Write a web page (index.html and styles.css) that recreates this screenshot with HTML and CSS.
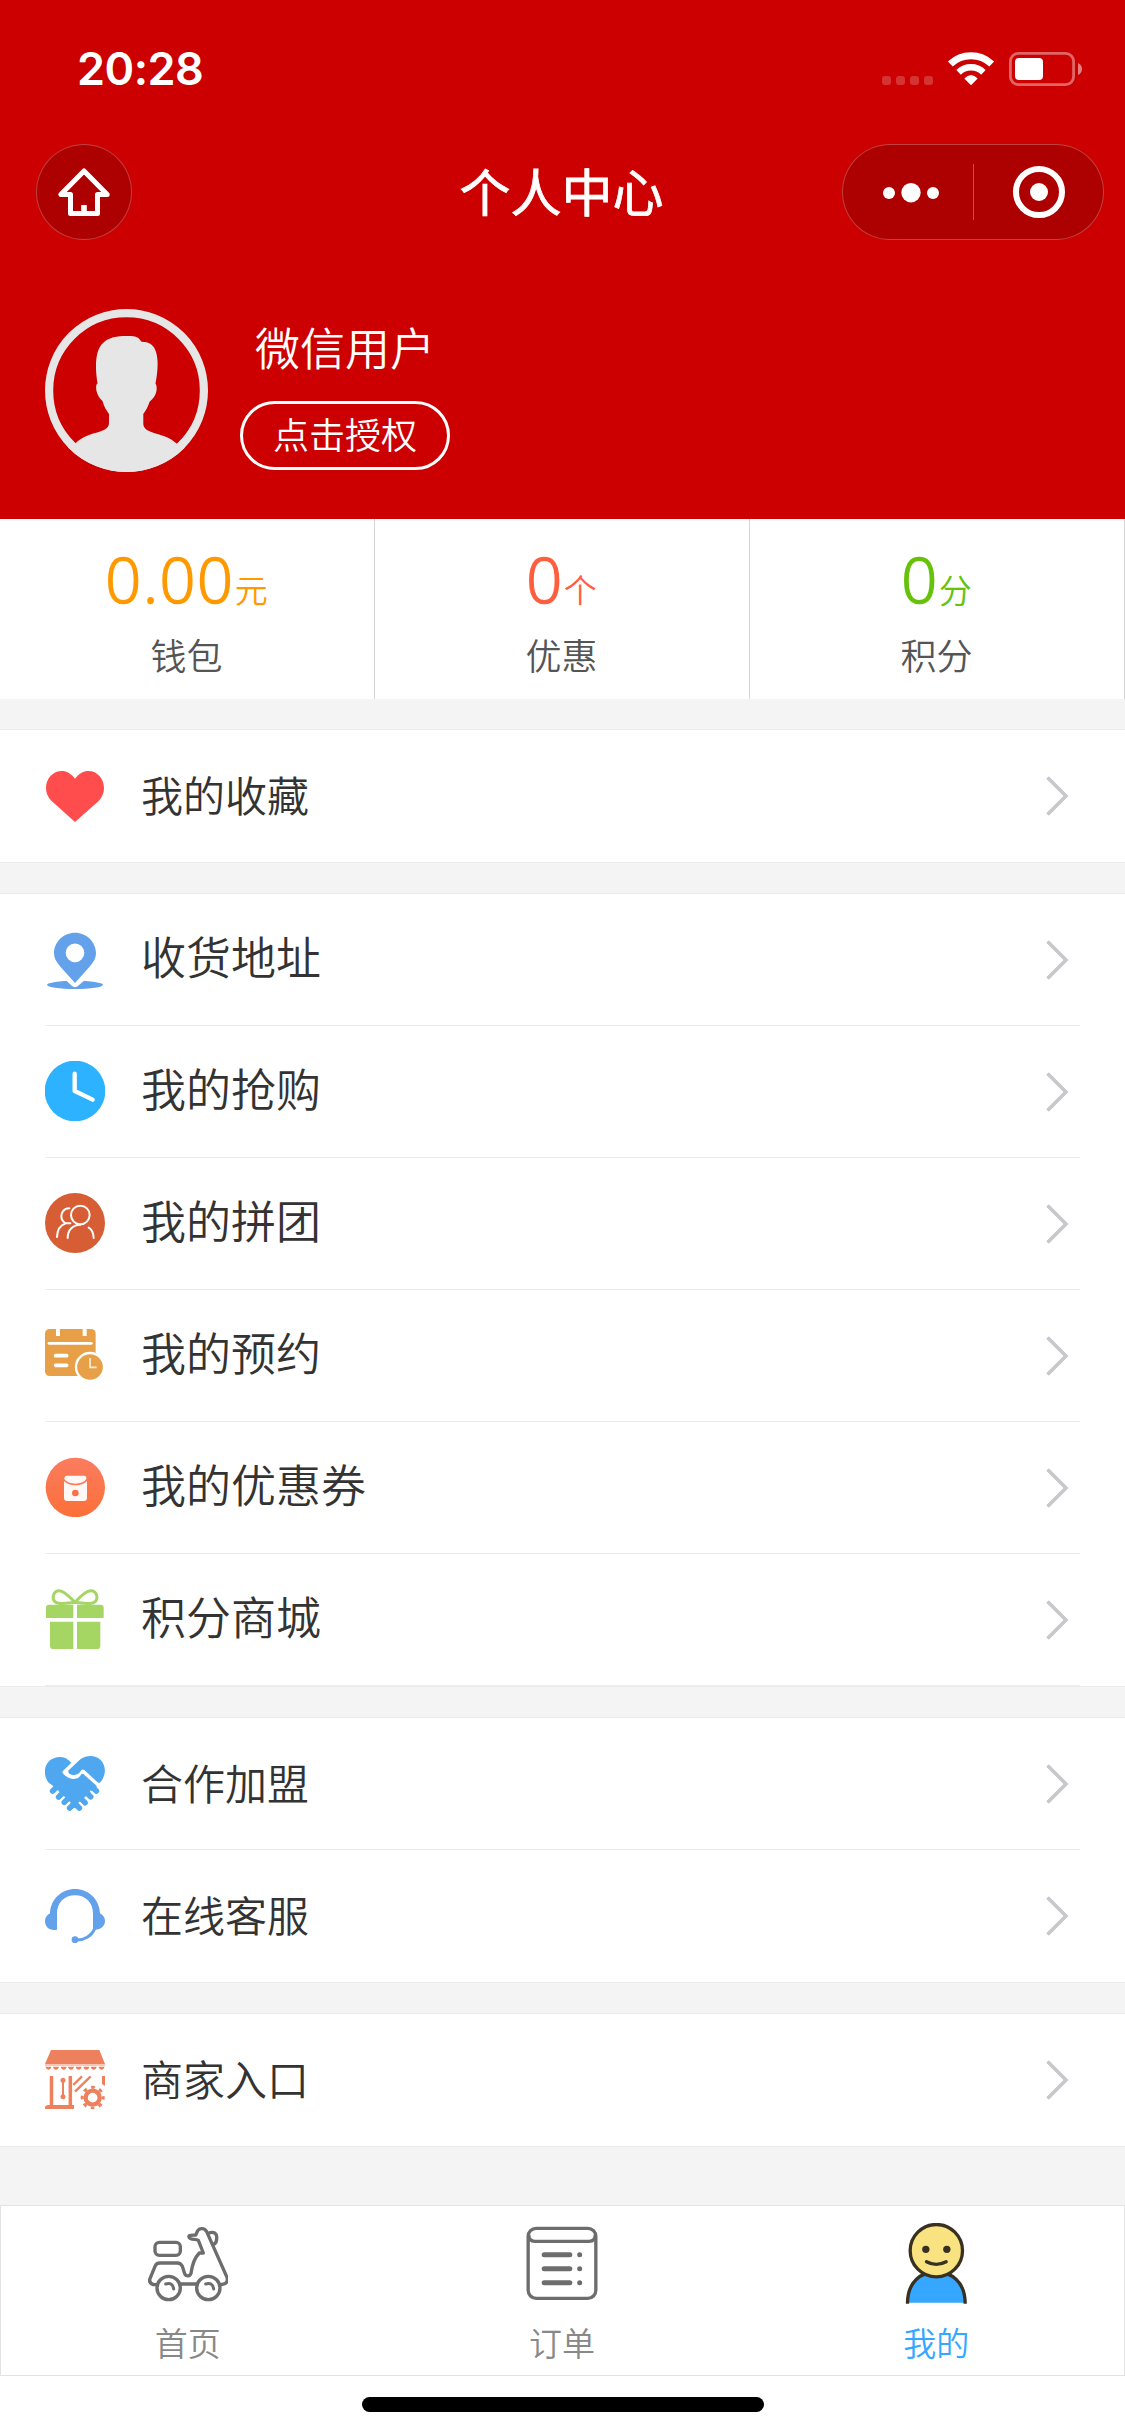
FILE: index.html
```html
<!DOCTYPE html>
<html lang="zh-CN">
<head>
<meta charset="utf-8">
<title>个人中心</title>
<link rel="stylesheet" href="styles.css">
</head>
<body>
<div class="page">
  <header class="header">
    <div class="status">
      <span class="time">20:28</span>
      <svg class="status-icons" viewBox="880 50 204 38">
        <g fill="#fff" fill-opacity=".2"><rect x="882" y="76" width="9" height="9" rx="3"/><rect x="896" y="76" width="9" height="9" rx="3"/><rect x="910" y="76" width="9" height="9" rx="3"/><rect x="924" y="76" width="9" height="9" rx="3"/></g>
        <g fill="none" stroke="#fff"><path d="M950.3 64 A30 30 0 0 1 991.700 64" stroke-width="7"/><path d="M958.600 72.300 A18 18 0 0 1 983.400 72.300" stroke-width="6.500"/></g>
        <path d="M964.300 78.600 Q971 71.500 977.700 78.600 L971 85.300Z" fill="#fff"/>
        <rect x="1010.400" y="53.400" width="63.200" height="31.200" rx="8" fill="none" stroke="#fff" stroke-opacity=".4" stroke-width="2.800"/>
        <rect x="1015" y="58" width="28" height="22" rx="4" fill="#fff"/>
        <path d="M1078 63 Q1082 65 1082 69 Q1082 73 1078 75Z" fill="#fff" fill-opacity=".5"/>
      </svg>
    </div>
    <div class="nav">
      <div class="home">
        <svg viewBox="36 144 96 96"><path d="M84 171 L60.800 194.500 H70.500 V213.500 H97.500 V194.500 H107.200Z" fill="none" stroke="#fff" stroke-width="5" stroke-linejoin="round"/><path d="M81.200 205H86.800V213H81.200Z" fill="#fff"/></svg>
      </div>
      <h1 class="title">个人中心</h1>
      <div class="capsule">
        <svg viewBox="842 144 262 96"><g fill="#fff"><circle cx="889" cy="193" r="6"/><circle cx="911" cy="192.700" r="9.700"/><circle cx="933" cy="193" r="6"/><circle cx="1039" cy="192" r="9"/></g><path d="M973.500 164V220" stroke="#fff" stroke-opacity=".3"/><circle cx="1039" cy="192" r="23" fill="none" stroke="#fff" stroke-width="6"/></svg>
      </div>
    </div>
    <div class="profile">
      <svg class="avatar" viewBox="45 309 163 163">
        <defs><clipPath id="disc"><circle cx="126.500" cy="390.500" r="81.500"/></clipPath></defs>
        <circle cx="126.500" cy="390.500" r="77.400" fill="none" stroke="#e6e6e6" stroke-width="8.200"/>
        <path clip-path="url(#disc)" fill="#e6e6e6" d="M109 414 C107 411 104 407 102.500 401 C99 398 95.500 392 96.200 386 C96.500 384 97 384 97.500 383.500 C95 368 95 352 102 344 C109 335.500 122 335.800 131 336 C137 336.200 139 338 141.500 341.800 C151 342 154 346 156 352 C158.800 361 157.500 373 155.500 383.500 C157.500 386 157 393 154 397 C152 400 150.500 400.500 149.500 402 C148 407 145.500 411 143.300 414 V424 C144 432 155 432.500 165 436.500 C170 438.500 174 441 176.500 443.500 L190 450 V480 H60 V450 L75.500 443.500 C79 439 88 435 94 433.300 C103 431 109 429 109 423Z"/>
      </svg>
      <div class="who">
        <div class="name">微信用户</div>
        <div class="auth">点击授权</div>
      </div>
    </div>
  </header>

  <section class="stats">
    <div class="stat"><div class="value orange">0.00<span class="unit">元</span></div><div class="label">钱包</div></div>
    <div class="stat"><div class="value coral">0<span class="unit">个</span></div><div class="label">优惠</div></div>
    <div class="stat"><div class="value green">0<span class="unit">分</span></div><div class="label">积分</div></div>
  </section>

  <section class="group small">
    <div class="row">
      <svg class="icon" viewBox="135 765 180 180"><path fill="#ff4d4d" d="M225 806 C212 790 200 783 186 783 C158 783 138 806 138 834 C138 850 144 862 155 873 L225 936 L296 873 C306 862 312 850 312 834 C312 806 292 783 265 783 C250 783 237 791 225 806Z"/></svg>
      <span class="text">我的收藏</span><svg class="arrow" viewBox="0 0 24 42"><path d="M2.500 2.500 L21 21 L2.500 39.500"/></svg>
    </div>
  </section>

  <section class="group large">
    <div class="row">
      <svg class="icon" viewBox="135 87 180 180"><ellipse cx="225" cy="254.500" rx="84" ry="12.500" fill="#63a1ea"/><path d="M200 238 L217 254 Q225 262 233 254 L252 238" fill="#fff" stroke="#fff" stroke-width="7"/><path fill="#63a1ea" fill-rule="evenodd" d="M225 249 L180 199 C168 184 162 174 162 160 C162 126 190 98 225 98 C260 98 288 126 288 160 C288 174 282 184 270 199Z M225 130.500A28 28 0 1 0 225 186.500A28 28 0 1 0 225 130.500Z"/></svg>
      <span class="text">收货地址</span><svg class="arrow" viewBox="0 0 24 42"><path d="M2.500 2.500 L21 21 L2.500 39.500"/></svg>
    </div>
    <div class="row">
      <svg class="icon" viewBox="135 483 180 180"><circle cx="225" cy="573" r="91" fill="#2db2ff"/><path d="M224 521V573L278 599" fill="none" stroke="#fff" stroke-width="13" stroke-linecap="round" stroke-linejoin="round"/></svg>
      <span class="text">我的抢购</span><svg class="arrow" viewBox="0 0 24 42"><path d="M2.500 2.500 L21 21 L2.500 39.500"/></svg>
    </div>
    <div class="row">
      <svg class="icon" viewBox="135 879 180 180"><circle cx="225" cy="969" r="90" fill="#d75e34"/><g fill="none" stroke="#fff" stroke-width="6" stroke-linecap="round"><circle cx="241" cy="945" r="28"/><path d="M208 925 C190 925 184 939 184 949 C184 959 190 966 197 970 C181 975 172 986 171 1011 M197 970H211 M203 1014 C203 989 220 974 241 974 M266 983 C276 988 280 999 281 1014"/></g></svg>
      <span class="text">我的拼团</span><svg class="arrow" viewBox="0 0 24 42"><path d="M2.500 2.500 L21 21 L2.500 39.500"/></svg>
    </div>
    <div class="row">
      <svg class="icon" viewBox="135 105 180 180"><rect x="135" y="117" width="152" height="141" rx="14" fill="#e8a048"/><g stroke="#fff" fill="none"><path d="M174 114V138M254 114V138" stroke-width="12"/><path d="M147 160H274" stroke-width="8" stroke-linecap="round"/><path d="M167 197H200M167 226H200" stroke-width="11" stroke-linecap="round"/></g><circle cx="270" cy="231" r="42" fill="#e8a048" stroke="#fff" stroke-width="7"/><path d="M270 204V232H290" fill="none" stroke="#fff" stroke-opacity=".8" stroke-width="5"/></svg>
      <span class="text">我的预约</span><svg class="arrow" viewBox="0 0 24 42"><path d="M2.500 2.500 L21 21 L2.500 39.500"/></svg>
    </div>
    <div class="row">
      <svg class="icon" viewBox="135 501 180 180"><defs><linearGradient id="coupon" x2="0" y2="1"><stop stop-color="#fb7c5f"/><stop offset="1" stop-color="#fc6f38"/></linearGradient></defs><circle cx="226" cy="592.500" r="89" fill="url(#coupon)"/><path fill="#fff" fill-opacity=".95" d="M192 573 C207 590 246 590 261 573 V624 Q261 633 251 633 H202 Q192 633 192 624Z"/><path fill="#fff" fill-opacity=".95" d="M193 567 Q193 557 201 557 H252 Q260 557 259 567 Q250 581 226 581 Q202 581 193 567Z"/><circle cx="226" cy="609" r="10" fill="#fb7048"/></svg>
      <span class="text">我的优惠券</span><svg class="arrow" viewBox="0 0 24 42"><path d="M2.500 2.500 L21 21 L2.500 39.500"/></svg>
    </div>
    <div class="row">
      <svg class="icon" viewBox="135 897 180 180"><g fill="#a5d663"><path d="M138 984V953Q138 944 147 944H220V984Z M231 984V944H302Q311 944 311 953V984Z M150 995H220V1077H160Q150 1077 150 1067Z M231 995H301V1067Q301 1077 291 1077H231Z"/></g><path d="M225 937 C211 922 192 902 178 902 C160 902 153 926 167 937 C178 945 205 939 225 937 C239 921 258 902 272 902 C291 902 297 926 283 937 C272 945 245 939 225 937Z" fill="none" stroke="#a5d663" stroke-width="9"/></svg>
      <span class="text">积分商城</span><svg class="arrow" viewBox="0 0 24 42"><path d="M2.500 2.500 L21 21 L2.500 39.500"/></svg>
    </div>
  </section>

  <section class="group small">
    <div class="row">
      <svg class="icon" viewBox="135 189 180 180"><g fill="#4fa7f0"><path d="M214 218 C196 196 168 197 150 211 C130 228 130 258 146 278 L160 288 L223 349 L288 294 Q292 290 288 286 L250 252 Q247 250 244 253 C238 262 234 267 220 267 C204 267 187 251 187 247 Q187 244 191 241Z"/><path d="M206 241 L242 207 C262 193 288 196 302 210 C319 228 319 256 301 277 Q297 280 293 277 L253 240 Q248 237 244 241 C238 248 236 254 223 255 C212 256 201 248 206 241Z"/></g><path d="M158 303L170 291M176 321L188 309M193 337L205 325M209 354L221 342M289 303L277 291M272 320L260 308M255 338L243 326M238 354L226 342" stroke="#4fa7f0" stroke-width="17" stroke-linecap="round"/><path d="M166 313L174 305M183 330L191 322M200 346L208 338M280 312L272 304M264 330L256 322M247 346L239 338" stroke="#fff" stroke-width="5" stroke-linecap="round"/></svg>
      <span class="text">合作加盟</span><svg class="arrow" viewBox="0 0 24 42"><path d="M2.500 2.500 L21 21 L2.500 39.500"/></svg>
    </div>
    <div class="row">
      <svg class="icon" viewBox="135 585 180 180"><g fill="#63a1ea"><path d="M171 719V671C171 638 193 616 225 616C257 616 279 638 279 671V719H285C302 719 315 709 315 693C315 683 309 675 300 670C298 626 264 597 225 597C186 597 152 626 150 670C141 675 135 683 135 693C135 709 146 721 164 720Z"/><circle cx="225" cy="749" r="10"/></g><path d="M284 716C275 738 252 751 228 750" fill="none" stroke="#63a1ea" stroke-width="9"/></svg>
      <span class="text">在线客服</span><svg class="arrow" viewBox="0 0 24 42"><path d="M2.500 2.500 L21 21 L2.500 39.500"/></svg>
    </div>
  </section>

  <section class="group small">
    <div class="row">
      <svg class="icon" viewBox="135 1077 180 180"><g fill="#ed815d"><path d="M153 1080H298L315 1122H135Z"/><path fill-opacity=".45" d="M135 1122H315V1128H135Z"/><path d="M136 1130h19q-3 9-9.500 9t-9.500-9z M159 1130h18q-2 9-9 9t-9-9z M182 1130h18q-2 9-9 9t-9-9z M204 1130h18q-2 9-9 9t-9-9z M227 1130h18q-2 9-9 9t-9-9z M250 1130h18q-2 9-9 9t-9-9z M272 1130h18q-2 9-9 9t-9-9z M295 1130h19q-3 9-9.500 9t-9.500-9z"/><path d="M306 1158H315V1188L306 1182Z M135 1253Q135 1245 146 1245H222V1260H142Q135 1260 135 1253Z"/><circle cx="189" cy="1171" r="7.500"/><circle cx="189" cy="1220" r="7.500"/></g><g fill="none" stroke="#ed815d"><path d="M154.500 1158V1248M211 1158V1248" stroke-width="10.500"/><path d="M189 1171V1220" stroke-width="6"/><path d="M220 1185L246 1159M225 1205L272 1159" stroke-width="7"/><circle cx="278" cy="1223" r="21" stroke-width="13"/><circle cx="278" cy="1223" r="31.500" stroke-width="9" stroke-dasharray="11 13.740" stroke-dashoffset="5.500"/></g></svg>
      <span class="text">商家入口</span><svg class="arrow" viewBox="0 0 24 42"><path d="M2.500 2.500 L21 21 L2.500 39.500"/></svg>
    </div>
  </section>

  <nav class="tabs">
    <div class="tab">
      <svg viewBox="51 69 243 243" fill="none" stroke="#6d6d6d" stroke-width="10" stroke-linejoin="round" stroke-linecap="round"><rect x="75" y="127" width="76" height="39" rx="13"/><circle cx="116" cy="264" r="35"/><circle cx="235" cy="264" r="35"/><path d="M78 254 H70 C60 250 57 244 60 236 L75 199 Q79 189 90 189 H142 Q152 189 157 199 L164 221 C168 230 180 230 183 220 C186 197 193 174 208 159 H220 L205 121 C197 116 183 121 178 113 C173 105 183 106 197 105 C202 97 201 87 213 86 Q224 84 230 95 L291 232 Q295 245 285 251 L274 254 M154 252H197 M236 99 C252 93 262 101 260 116 Q260 128 252 133"/><path stroke-width="9" d="M107 252Q127 245 131 267M227 252Q247 245 251 267"/></svg>
      <span>首页</span>
    </div>
    <div class="tab">
      <svg viewBox="64.500 69 243 243" fill="none" stroke="#6d6d6d" stroke-width="10" stroke-linecap="round"><rect x="86" y="85" width="203" height="210" rx="24"/><path d="M88 106Q88 124 106 124H269Q287 124 287 106"/><path stroke-width="15" d="M134 164H211M134 206H211M134 248H211"/><path stroke-width="15" d="M240.500 164h.1M240.500 206h.1M240.500 248h.1"/></svg>
      <span>订单</span>
    </div>
    <div class="tab active">
      <svg viewBox="1188.500 69 243 243"><path d="M1223 308C1223 244 1264 216 1309 216S1396 244 1396 308" fill="#36a7ff"/><path d="M1223 311C1223 244 1264 216 1309 216S1396 244 1396 311" fill="none" stroke="#383122" stroke-width="10"/><circle cx="1309.500" cy="152" r="78.500" fill="#f9e380" stroke="#383122" stroke-width="10"/><circle cx="1278" cy="148" r="11" fill="#383122"/><circle cx="1341" cy="148" r="11" fill="#383122"/><path d="M1280 185Q1309 201 1339 185" fill="none" stroke="#383122" stroke-width="10" stroke-linecap="round"/></svg>
      <span>我的</span>
    </div>
  </nav>
  <div class="bottom"><div class="indicator"></div></div>
</div>
</body>
</html>
```

FILE: styles.css
```css
* { box-sizing: border-box; }
body { margin: 0; background: #f4f4f4; font-family: "Noto Sans CJK SC", sans-serif; font-weight: 350; }
svg { display: block; flex: none; }
.page { width: 1125px; height: 2436px; display: flex; flex-direction: column; background: #f4f4f4; }

.header { height: 519px; background: #cc0000; color: #fff; flex: none; }
.status { height: 144px; display: flex; justify-content: space-between; padding: 50px 41px 0 77px; }
.time { font: 600 45px/38px Inter, sans-serif; letter-spacing: -0.5px; }
.status-icons { width: 204px; height: 38px; }
.nav { height: 96px; display: grid; grid-template-columns: 262px 1fr 262px; padding: 0 21px 0 36px; }
.home, .capsule { height: 96px; border-radius: 48px; background: rgba(0, 0, 0, .15); box-shadow: inset 0 0 0 1px rgba(255, 255, 255, .25); }
.home { width: 96px; }
.capsule { width: 262px; }
.home svg, .capsule svg { width: 100%; height: 96px; }
.title { margin: 0 0 0 -17px; text-align: center; font-size: 51px; line-height: 92px; font-weight: 400; -webkit-text-stroke: .8px #fff; }
.profile { display: flex; padding: 69px 0 0 45px; }
.avatar { width: 163px; height: 163px; }
.who { padding: 10px 0 0 32px; }
.name { font-size: 45px; line-height: 56px; padding-left: 15px; }
.auth { width: 210px; height: 69px; margin-top: 26px; border: 3px solid #fff; border-radius: 35px; font-size: 36px; line-height: 58px; text-align: center; }

.stats { height: 180px; flex: none; display: grid; grid-template-columns: repeat(3, 1fr); background: #fff; margin-bottom: 30px; text-align: center; }
.stat { border-right: 1px solid #d6d6d6; padding: 16px 1px 0 0; }
.value { font: 300 63px/88px "Open Sans", "Noto Sans CJK SC", sans-serif; letter-spacing: 1.6px; -webkit-text-stroke: 1.6px currentColor; }
.unit { display: inline-block; font: 350 33px/40px "Noto Sans CJK SC", sans-serif; letter-spacing: 0; -webkit-text-stroke: 0; }
.label { margin-top: 6px; font-size: 36px; line-height: 50px; color: #555; }
.orange { color: #ff9900; }
.coral { color: #ff5f3e; }
.green { color: #66c20a; }

.group { flex: none; background: #fff; border-top: 1px solid #ececec; border-bottom: 1px solid #ececec; margin-bottom: 30px; padding: 0 45px; }
.row { height: 132px; display: flex; align-items: center; border-bottom: 1px solid #ececec; }
.small .row:last-child { border-bottom: 0; }
.icon { width: 60px; height: 60px; align-self: flex-start; margin-top: 35px; }
.text { flex: 1; margin-left: 36px; color: #333; font-size: 42px; line-height: 60px; padding-bottom: 4px; }
.large .text { font-size: 45px; padding-bottom: 7px; }
.arrow { width: 24px; height: 42px; margin-right: 11px; fill: none; stroke: #c7c7cc; stroke-width: 3.600px; }

.tabs { margin-top: auto; height: 171px; flex: none; display: grid; grid-template-columns: repeat(3, 1fr); background: #fff; border: 1px solid #e3e3e3; }
.tab { display: flex; flex-direction: column; align-items: center; padding: 17px 1px 0 0; font-size: 33px; line-height: 48px; color: #888; }
.tab svg { width: 81px; height: 81px; margin-bottom: 14px; }
.tab.active { color: #36a7ff; }
.bottom { height: 60px; flex: none; background: #fff; padding-top: 21px; }
.indicator { width: 402px; height: 15px; margin: 0 auto; border-radius: 8px; background: #000; }
```
